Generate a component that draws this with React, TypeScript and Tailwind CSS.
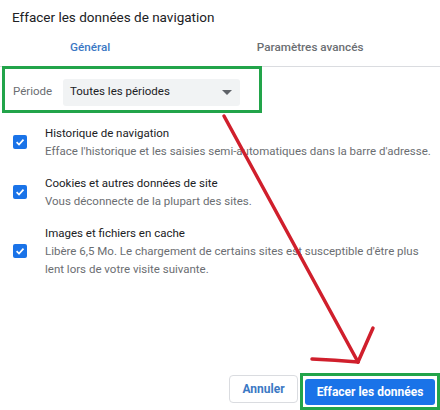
export default function App() {
    const items = [
        {
            title: "Historique de navigation",
            desc: [
                "Efface l'historique et les saisies semi-automatiques dans la barre d'adresse.",
            ],
        },
        {
            title: "Cookies et autres données de site",
            desc: ["Vous déconnecte de la plupart des sites."],
        },
        {
            title: "Images et fichiers en cache",
            desc: [
                "Libère 6,5 Mo. Le chargement de certains sites est susceptible d'être plus",
                "lent lors de votre visite suivante.",
            ],
        },
    ];

    return (
        <div className="relative w-[440px] h-[410px] overflow-hidden bg-white font-['Roboto',sans-serif] flex flex-col">
            <div className="h-[32px] pl-3 flex items-center pt-[2px] text-[13.5px] text-[#202124]">
                Effacer les données de navigation
            </div>

            <div className="h-[35px] pb-[2px] flex items-center border-b border-[#dadce0] text-[11.7px] font-medium whitespace-nowrap">
                <div className="w-[186px] text-center text-[#3b78c4]">
                    Général
                </div>
                <div className="w-[268px] text-center text-[#6b6e72]">
                    Paramètres avancés
                </div>
            </div>

            <div className="ml-[2px] w-[260px] h-[47px] -mt-[1px] border-[3px] border-[#22a44a] flex items-center pt-[5px]">
                <div className="w-[58px] pl-[8px] text-[11.5px] text-[#6b6e72]">
                    Période
                </div>
                <div className="w-[177px] h-[27px] bg-[#f1f3f4] rounded-[3px] flex items-center pl-[7px] pr-[8px] text-[11.5px] text-[#202124]">
                    <span className="flex-1">Toutes les périodes</span>
                    <svg width="10" height="5" viewBox="0 0 10 5">
                        <path d="M0 0 L10 0 L5 5 Z" fill="#5f6368" />
                    </svg>
                </div>
            </div>

            <div className="mt-[11px] flex flex-col gap-[14px]">
                {items.map((it) => (
                    <div key={it.title} className="flex items-center">
                        <div className="w-[45px] pl-[13px]">
                            <div className="w-[14px] h-[14px] rounded-[2px] bg-[#1a73e8] flex items-center justify-center">
                                <svg width="10" height="10" viewBox="0 0 10 10">
                                    <path
                                        d="M1.6 5.2 L4 7.5 L8.5 2.6"
                                        fill="none"
                                        stroke="white"
                                        strokeWidth="1.7"
                                    />
                                </svg>
                            </div>
                        </div>
                        <div className="text-[11.5px] leading-[18px] whitespace-nowrap">
                            <div className="text-[#202124]">{it.title}</div>
                            {it.desc.map((d) => (
                                <div key={d} className="text-[#6b6e72]">
                                    {d}
                                </div>
                            ))}
                        </div>
                    </div>
                ))}
            </div>

            <div className="mt-auto flex items-end justify-end">
                <button className="mb-[7px] mr-[2px] w-[69px] h-[28px] rounded-[4px] border border-[#dadce0] bg-white text-[12px] font-bold text-[#3b78c4]">
                    Annuler
                </button>
                <div className="w-[140px] h-[37px] border-[3px] border-[#22a44a] p-[2px] flex items-center">
                    <button className="w-full h-[26px] rounded-[3px] bg-[#1a73e8] text-white text-[12px] font-bold">
                        Effacer les données
                    </button>
                </div>
            </div>

            <svg
                className="absolute inset-0 pointer-events-none"
                width="440"
                height="410"
                viewBox="0 0 440 410"
            >
                <g
                    fill="none"
                    stroke="#d01f2c"
                    strokeWidth="3.5"
                    strokeLinecap="round"
                >
                    <path d="M224 116 L358 362" />
                    <path d="M312 359 Q335 360 358 362" />
                    <path d="M373 328 L358 362" />
                </g>
            </svg>
        </div>
    );
}
